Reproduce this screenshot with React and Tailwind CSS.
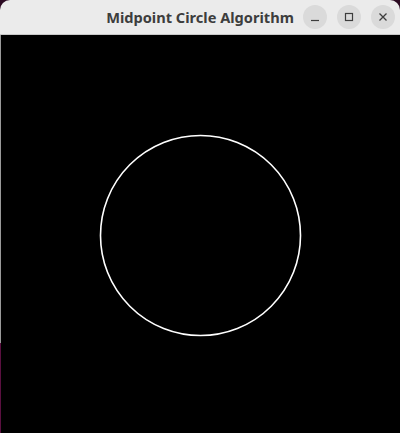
const TitleButton = ({ children }) => (
  <div className="w-6 h-6 rounded-full bg-[#dadada] flex items-center justify-center text-[#3d3d3d]">
    {children}
  </div>
);

const App = () => {
  return (
    <div className="w-[400px] h-[433px] bg-[#2c0a22] flex flex-col overflow-hidden">
      {/* Title bar */}
      <div className="h-[35px] shrink-0 bg-[#ebebeb] rounded-t-[10px] border-b border-[#c8c8c8] flex items-center relative">
        <div
          className="w-full text-center text-[14.6px] font-bold text-[#3d3d3d] pt-px"
          style={{ fontFamily: '"Noto Sans", "DejaVu Sans", sans-serif' }}
        >
          Midpoint Circle Algorithm
        </div>
        <div className="absolute right-[5px] top-[5px] flex gap-[10px]">
          <TitleButton>
            <svg width="10" height="10" viewBox="0 0 10 10">
              <path d="M1 8.5h8" stroke="currentColor" strokeWidth="1.2" />
            </svg>
          </TitleButton>
          <TitleButton>
            <svg width="10" height="10" viewBox="0 0 10 10">
              <rect x="1.5" y="1.5" width="7" height="7" fill="none" stroke="currentColor" strokeWidth="1.2" />
            </svg>
          </TitleButton>
          <TitleButton>
            <svg width="10" height="10" viewBox="0 0 10 10">
              <path d="M1.5 1.5l7 7M8.5 1.5l-7 7" stroke="currentColor" strokeWidth="1.3" />
            </svg>
          </TitleButton>
        </div>
      </div>

      {/* Canvas */}
      <div className="flex-1 flex">
        <div className="w-px flex flex-col">
          <div className="h-[308px] bg-[#9a9a9a]" />
          <div className="flex-1 bg-[#5a1040]" />
        </div>
        <div className="flex-1 bg-black">
          <svg width="399" height="398" viewBox="1 0 399 398">
            <circle cx="200.5" cy="200.5" r="100" fill="none" stroke="white" strokeWidth="1.6" />
          </svg>
        </div>
      </div>
    </div>
  );
};

export default App;
